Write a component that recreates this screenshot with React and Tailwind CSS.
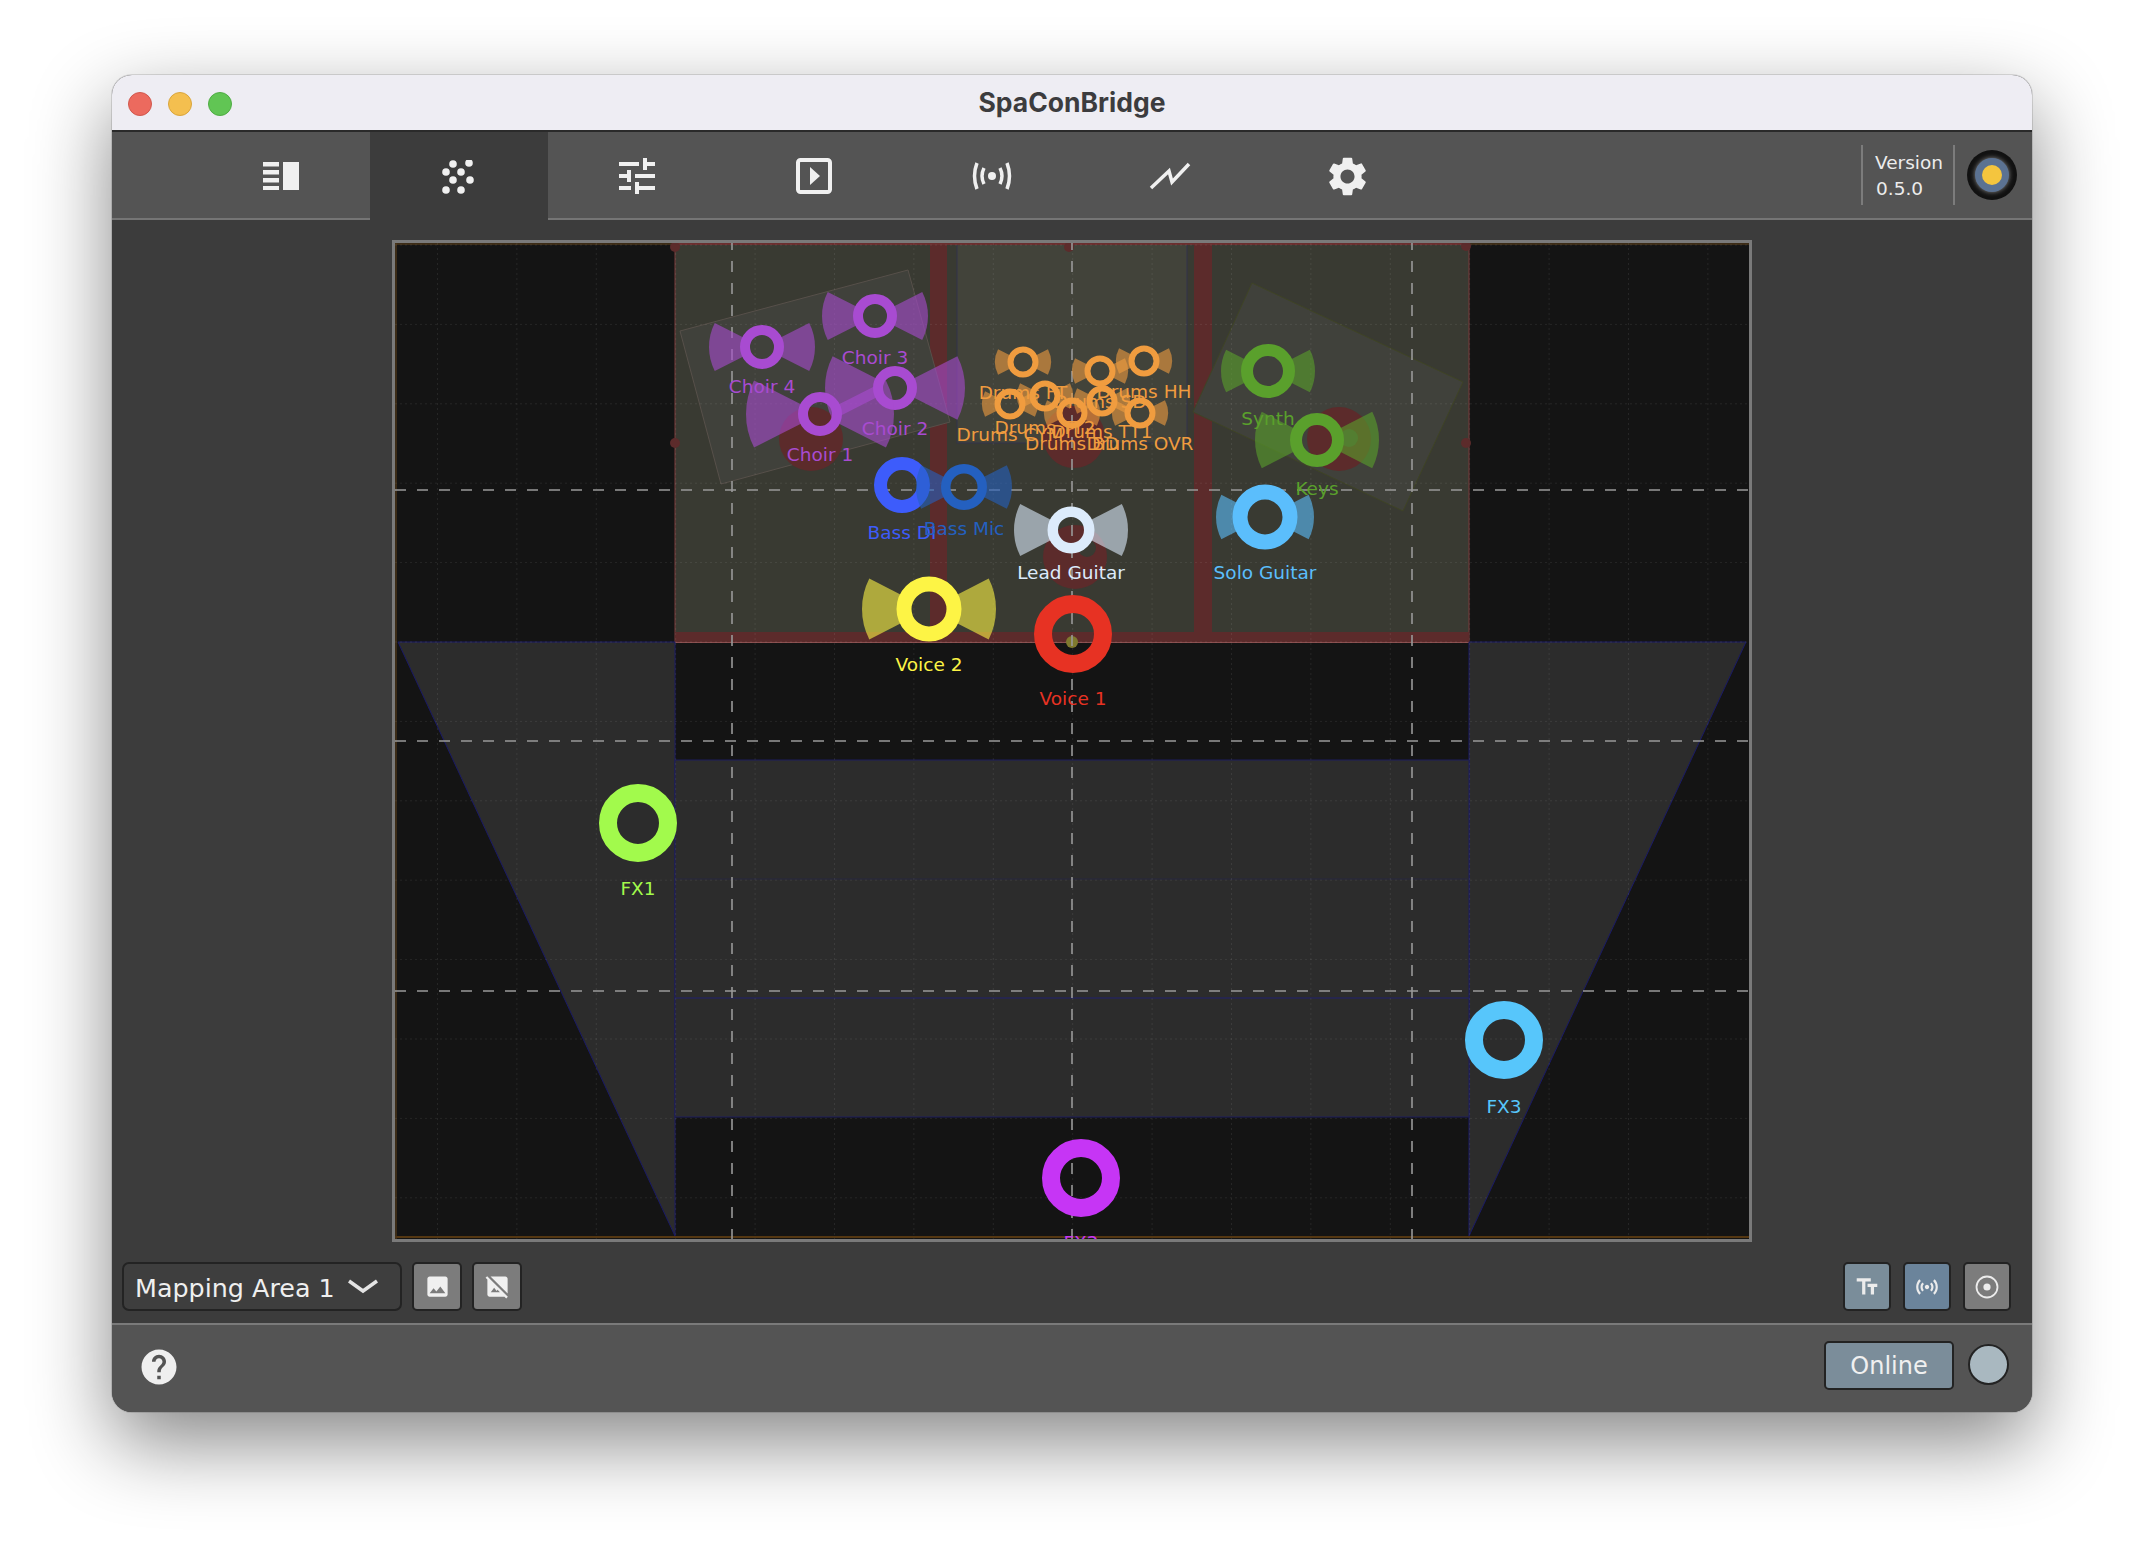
import React from "react";
import { MdTune, MdSettings, MdImage, MdHideImage, MdTextFields, MdSensors, MdHelp } from "react-icons/md";

const GRID_X = Array.from({ length: 17 }, (_, i) => 437.5 + i * 79.4);
const GRID_Y = Array.from({ length: 13 }, (_, i) => 245 + i * 79.4);

const CHOIR = "#a84bd1";
const DRUMS = "#f09c3f";
const GREEN = "#5aa02c";

// x, y, outer and inner radius, wing radius (0 = no wings), label offset from the ring
const NODES = [
  { name: "Choir 3", x: 875, y: 316, o: 22, i: 12, w: 53, c: CHOIR, ly: 48 },
  { name: "Choir 4", x: 762, y: 347, o: 22, i: 12, w: 53, c: CHOIR, ly: 46 },
  { name: "Choir 2", x: 895, y: 388, o: 22, i: 12, w: 70, c: CHOIR, ly: 47 },
  { name: "Choir 1", x: 820, y: 414, o: 22, i: 12, w: 74, c: CHOIR, ly: 47 },
  { name: "Drums FT", x: 1023, y: 362, o: 15.5, i: 9.5, w: 28, c: DRUMS, ly: 37 },
  { name: "Drums SD", x: 1100, y: 371, o: 15.5, i: 9.5, w: 28, c: DRUMS, ly: 37 },
  { name: "Drums HH", x: 1144, y: 361, o: 15.5, i: 9.5, w: 28, c: DRUMS, ly: 37 },
  { name: "Drums CYM", x: 1010, y: 404, o: 15.5, i: 9.5, w: 28, c: DRUMS, ly: 37 },
  { name: "Drums TT2", x: 1045, y: 396, o: 15.5, i: 9.5, w: 28, c: DRUMS, ly: 38 },
  { name: "Drums BD", x: 1072, y: 413, o: 15.5, i: 9.5, w: 28, c: DRUMS, ly: 37 },
  { name: "Drums TT1", x: 1102, y: 401, o: 15.5, i: 9.5, w: 28, c: DRUMS, ly: 37 },
  { name: "Drums OVR", x: 1140, y: 413, o: 15.5, i: 9.5, w: 28, c: DRUMS, ly: 37 },
  { name: "Synth", x: 1268, y: 371, o: 27, i: 15, w: 47, c: GREEN, ly: 54 },
  { name: "Keys", x: 1317, y: 440, o: 27, i: 15, w: 62, c: GREEN, ly: 55 },
  { name: "Bass DI", x: 902, y: 485, o: 28, i: 15, w: 0, c: "#3d5cfb", ly: 54 },
  { name: "Bass Mic", x: 964, y: 487, o: 23, i: 13.5, w: 48, c: "#2460c0", ly: 48 },
  { name: "Lead Guitar", x: 1071, y: 530, o: 23.5, i: 13, w: 57, c: "#dcebfb", ly: 49 },
  { name: "Solo Guitar", x: 1265, y: 517, o: 32.5, i: 17.5, w: 49, c: "#5bbefc", ly: 62 },
  { name: "Voice 2", x: 929, y: 609, o: 32.5, i: 17.5, w: 67, c: "#fdf445", ly: 62 },
  { name: "Voice 1", x: 1073, y: 634, o: 39, i: 21, w: 0, c: "#e73223", ly: 71 },
  { name: "FX1", x: 638, y: 823, o: 39, i: 21, w: 0, c: "#a2fa4c", ly: 72 },
  { name: "FX3", x: 1504, y: 1040, o: 39, i: 21, w: 0, c: "#57c6fb", ly: 73 },
  { name: "FX2", x: 1081, y: 1178, o: 39, i: 21, w: 0, c: "#c635f5", ly: 71 },
];

const wingPath = (n, side) => {
  const a = (27 * Math.PI) / 180;
  const r0 = (n.o + n.i) / 2;
  const px = (r) => n.x + side * r * Math.cos(a);
  const sweep = side > 0 ? 1 : 0;
  return `M${px(r0)} ${n.y - r0 * Math.sin(a)} L${px(n.w)} ${n.y - n.w * Math.sin(a)} A${n.w} ${n.w} 0 0 ${sweep} ${px(n.w)} ${n.y + n.w * Math.sin(a)} L${px(r0)} ${n.y + r0 * Math.sin(a)} Z`;
};

const Node = ({ n }) => (
  <g>
    {n.w > 0 && (
      <>
        <path d={wingPath(n, -1)} fill={n.c} fillOpacity="0.6" />
        <path d={wingPath(n, 1)} fill={n.c} fillOpacity="0.6" />
      </>
    )}
    <circle cx={n.x} cy={n.y} r={(n.o + n.i) / 2} fill="none" stroke={n.c} strokeWidth={n.o - n.i} />
    <text x={n.x} y={n.y + n.ly} textAnchor="middle" fill={n.c}>
      {n.name}
    </text>
  </g>
);

const MappingCanvas = () => (
  <svg viewBox="395 243 1354 996" className="block w-full h-full text-[18.5px]">
    <rect x="395" y="243" width="1354" height="996" fill="#141414" />
    <line x1="395" y1="1237" x2="1749" y2="1237" stroke="#6a4312" strokeWidth="1.5" />
    <line x1="396" y1="243" x2="396" y2="1239" stroke="#4a3418" strokeWidth="1.5" />
    <line x1="395" y1="244" x2="1749" y2="244" stroke="#4a3418" strokeWidth="1.5" />

    {/* stage */}
    <rect x="675" y="243" width="794" height="399" fill="#393a32" stroke="#7a3a3a" />
    <rect x="957" y="243" width="230" height="200" fill="#42433a" stroke="#33334a" />
    <rect x="930" y="243" width="17" height="390" fill="#5c2b2b" />
    <rect x="1194" y="243" width="18" height="390" fill="#5c2b2b" />
    <rect x="675" y="632" width="794" height="10" fill="#5c2b2b" />
    <line x1="675" y1="642.5" x2="1469" y2="642.5" stroke="#8a4f4f" />
    <polygon points="680,331 908,270 950,422 721,484" fill="#40413b" stroke="#57504a" />
    <polygon points="1252,283 1463,382 1403,511 1193,412" fill="#40413b" stroke="#3f4426" />
    <rect x="675" y="243" width="794" height="2" fill="#6a2f2f" />

    {/* side wedges and floor */}
    <polygon points="398,642 675,642 675,1236" fill="#2c2c2c" stroke="#1a1a66" />
    <polygon points="1469,642 1746,642 1469,1236" fill="#2c2c2c" stroke="#1a1a66" />
    <rect x="675" y="760" width="794" height="357" fill="#2c2c2c" stroke="#1c1c5c" />
    <line x1="675" y1="879" x2="1469" y2="879" stroke="#26263e" />
    <line x1="675" y1="998" x2="1469" y2="998" stroke="#20206e" />

    {/* fine grid */}
    {GRID_X.map((x) => (
      <line key={x} x1={x} y1="243" x2={x} y2="1239" stroke="#fff" strokeOpacity="0.08" strokeDasharray="2 3" />
    ))}
    {GRID_Y.map((y) => (
      <line key={y} x1="395" y1={y} x2="1749" y2={y} stroke="#fff" strokeOpacity="0.08" strokeDasharray="2 3" />
    ))}

    {/* speakers */}
    {[[675, 247], [1069, 247], [1466, 246], [675, 443], [1466, 443]].map(([x, y]) => (
      <circle key={x + "-" + y} cx={x} cy={y} r="5" fill="#5c2b2b" />
    ))}
    <circle cx="811" cy="439" r="32" fill="#5c2b2b" />
    <circle cx="1074" cy="437" r="31" fill="#5c2b2b" />
    <circle cx="1339" cy="439" r="32" fill="#5c2b2b" />
    <circle cx="1349" cy="438" r="9" fill="#4a4c3a" />
    <circle cx="1075" cy="557" r="32" fill="#5c2b2b" />
    <circle cx="1087" cy="548" r="9" fill="#393a32" />
    <circle cx="1072" cy="642" r="6" fill="#7f7a2e" />

    {/* dashed thirds */}
    {[490, 741, 991].map((y) => (
      <line key={y} x1="395" y1={y} x2="1749" y2={y} stroke="#999" strokeWidth="1.6" strokeDasharray="11 11" />
    ))}
    {[732, 1072, 1412].map((x) => (
      <line key={x} x1={x} y1="243" x2={x} y2="1239" stroke="#999" strokeWidth="1.6" strokeDasharray="11 11" strokeDashoffset="4" />
    ))}

    {NODES.map((n) => (
      <Node key={n.name} n={n} />
    ))}
  </svg>
);

const ListIcon = () => (
  <svg width="36" height="28" viewBox="0 0 36 28" fill="#f0f0f0">
    <rect x="0" y="0" width="16" height="4.5" />
    <rect x="0" y="8" width="16" height="4.5" />
    <rect x="0" y="16" width="16" height="4.5" />
    <rect x="0" y="24" width="16" height="4" />
    <rect x="20" y="0" width="16" height="28" />
  </svg>
);

const DotsIcon = () => (
  <svg width="34" height="34" viewBox="0 0 34 34" fill="#f0f0f0">
    {[[11, 4], [27, 3], [4, 12], [19, 12], [11, 20], [28, 20], [4, 30], [19, 30]].map(([x, y]) => (
      <circle key={x + "-" + y} cx={x} cy={y} r="3.8" />
    ))}
  </svg>
);

const PlayIcon = () => (
  <svg width="36" height="36" viewBox="0 0 36 36">
    <rect x="2" y="2" width="32" height="32" rx="2.5" fill="none" stroke="#f0f0f0" strokeWidth="4" />
    <polygon points="14,9 24,18 14,27" fill="#f0f0f0" />
  </svg>
);

const BroadcastIcon = () => (
  <svg width="42" height="30" viewBox="0 0 42 30" fill="none" stroke="#f0f0f0" strokeWidth="3.5">
    <path d="M6 2 Q1 15 6 28" />
    <path d="M36 2 Q41 15 36 28" />
    <path d="M13 7 Q9 15 13 23" />
    <path d="M29 7 Q33 15 29 23" />
    <circle cx="21" cy="15" r="4" fill="#f0f0f0" stroke="none" />
  </svg>
);

const TrendIcon = () => (
  <svg width="42" height="28" viewBox="0 0 42 28" fill="none" stroke="#f0f0f0" strokeWidth="3.5">
    <polyline points="2,26 20,9 23,20 40,2" />
  </svg>
);

const TABS = [
  <ListIcon key="list" />,
  <DotsIcon key="dots" />,
  <MdTune key="tune" size={48} color="#f0f0f0" />,
  <PlayIcon key="play" />,
  <BroadcastIcon key="broadcast" />,
  <TrendIcon key="trend" />,
  <MdSettings key="settings" size={47} color="#f0f0f0" />,
];

export default function App() {
  return (
    <div className="min-h-[1560px] bg-white pt-[75px] pl-[112px] font-['DejaVu_Sans',sans-serif]">
      <div className="w-[1920px] h-[1337px] flex flex-col rounded-[20px] overflow-hidden bg-[#3c3c3c] shadow-[0_0_0_1px_rgba(0,0,0,0.12),0_30px_80px_rgba(0,0,0,0.48)]">
        {/* title bar */}
        <div className="h-[57px] shrink-0 relative flex items-center justify-center bg-[#eeedf3] border-b-2 border-[#2a2a2a]">
          <div className="absolute left-[16px] top-[17px] flex gap-[16px]">
            <span className="w-[24px] h-[24px] rounded-full bg-[#ec6a5e] border border-[#d0584d]" />
            <span className="w-[24px] h-[24px] rounded-full bg-[#f4bf4f] border border-[#d9a53c]" />
            <span className="w-[24px] h-[24px] rounded-full bg-[#61c554] border border-[#4fac44]" />
          </div>
          <span className="font-['Inter',sans-serif] font-bold text-[26.5px] text-[#3c3c3e]">SpaConBridge</span>
        </div>

        {/* toolbar */}
        <div className="h-[88px] shrink-0 flex bg-[#545454]">
          <div className="w-[80px] border-b-2 border-[#757575]" />
          {TABS.map((icon, i) => (
            <div
              key={i}
              className={
                i === 1
                  ? "w-[177.85px] pb-[1px] pt-[2px] flex items-center justify-center bg-[#3c3c3c]"
                  : "w-[177.85px] pt-[2px] flex items-center justify-center border-b-2 border-[#757575]"
              }
            >
              {icon}
            </div>
          ))}
          <div className="flex-1 flex items-center justify-end pr-[15px] border-b-2 border-[#757575]">
            <div className="h-[60px] w-[94px] pl-[12px] border-l-2 border-r-2 border-[#7c7c7c] flex flex-col justify-center gap-[4px] text-[18.5px] leading-[22px] text-[#ececec]">
              <span className="pt-[2px]">Version</span>
              <span className="pl-[1px]">0.5.0</span>
            </div>
            <div className="ml-[12px] w-[50px] h-[50px] rounded-full bg-[#111] flex items-center justify-center">
              <div className="w-[34px] h-[34px] rounded-full bg-[#5b7292] shadow-[0_0_5px_#8a8a8a] flex items-center justify-center">
                <div className="w-[20px] h-[20px] rounded-full bg-[#f4c53e]" />
              </div>
            </div>
          </div>
        </div>

        {/* mapping area */}
        <div className="flex-1 flex flex-col items-center pt-[20px]">
          <div className="w-[1360px] h-[1002px] border-[3px] border-[#7a7a7a] overflow-hidden">
            <MappingCanvas />
          </div>
          <div className="w-full mt-[20px] pl-[10px] pr-[21px] flex items-center justify-between">
            <div className="flex items-center gap-[10px]">
              <div className="w-[280px] h-[49px] pl-[11px] flex items-center gap-[13px] rounded-[7px] border-2 border-[#232323] bg-[#3e3e3e] text-[25.4px] text-[#efefef]">
                <span className="pt-[3px]">Mapping Area 1</span>
                <svg width="30" height="15" viewBox="0 0 30 15" fill="none" stroke="#e4e4e4" strokeWidth="3.5">
                  <polyline points="1,2 15,12 29,2" />
                </svg>
              </div>
              <div className="w-[50px] h-[49px] flex items-center justify-center rounded-[5px] border-2 border-[#232323] bg-[#7c7c7c]">
                <MdImage size={27} color="#f0f0f0" />
              </div>
              <div className="w-[50px] h-[49px] flex items-center justify-center rounded-[5px] border-2 border-[#232323] bg-[#7c7c7c]">
                <MdHideImage size={27} color="#f0f0f0" />
              </div>
            </div>
            <div className="flex items-center gap-[12px]">
              <div className="w-[48px] h-[49px] flex items-center justify-center rounded-[5px] border-2 border-[#232323] bg-[#7a8d9a]">
                <MdTextFields size={26} color="#ececec" />
              </div>
              <div className="w-[48px] h-[49px] flex items-center justify-center rounded-[5px] border-2 border-[#232323] bg-[#6b849b]">
                <MdSensors size={26} color="#ececec" />
              </div>
              <div className="w-[48px] h-[49px] flex items-center justify-center rounded-[5px] border-2 border-[#232323] bg-[#7c7c7c]">
                <svg width="24" height="24" viewBox="0 0 24 24">
                  <circle cx="12" cy="12" r="10.5" fill="none" stroke="#ececec" strokeWidth="1.8" />
                  <circle cx="12" cy="12" r="3.6" fill="#ececec" />
                </svg>
              </div>
            </div>
          </div>
        </div>

        {/* status bar */}
        <div className="h-[89px] mt-[12px] shrink-0 flex items-center justify-between pl-[26px] pr-[23px] border-t-2 border-[#7a7a7a] bg-[#545454]">
          <span className="-mt-[3px]">
            <MdHelp size={42} color="#efefef" />
          </span>
          <div className="flex items-center gap-[14px] -mt-[6px]">
            <div className="w-[130px] h-[49px] flex items-center justify-center rounded-[5px] border-2 border-[#232323] bg-[#7b8d9a] text-[24px] text-[#f0f0f0]">
              Online
            </div>
            <div className="w-[41px] h-[41px] -mt-[2px] rounded-full border-2 border-[#232323] bg-[#a9b8c0]" />
          </div>
        </div>
      </div>
    </div>
  );
}
